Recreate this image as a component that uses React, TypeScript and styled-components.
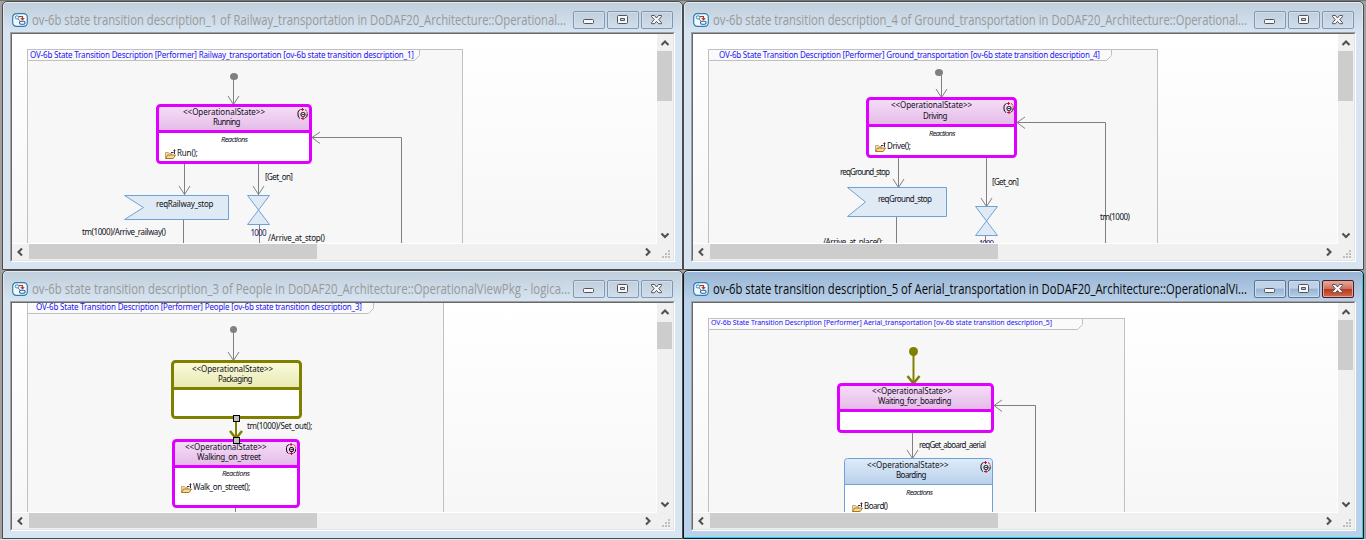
import React from "react";
import styled, { createGlobalStyle, css } from "styled-components";

const GlobalStyle = createGlobalStyle`
  html, body { margin: 0; padding: 0; }
  body { width: 1366px; height: 540px; overflow: hidden; background: #8f8f8f; }
  * { box-sizing: border-box; }
`;

const Desktop = styled.main`
  display: grid;
  grid-template-columns: 681px 681px;
  grid-template-rows: 269px 269px;
  width: 1366px;
  height: 540px;
  padding: 1px 0 0 2px;
  background: linear-gradient(#74766f 0 1px, #a0a0a0 1px 539px, #e4e8ea 539px);
`;

const Frame = styled.section<{ $active?: boolean }>`
  display: flex;
  flex-direction: column;
  padding: 0 7px 7px 7px;
  border: 1px solid #4b4b4d;
  border-radius: 5px 5px 0 0;
  box-shadow: inset 0 1px 0 #e4ecf3, inset 1px 0 0 #dfe8f2, inset -1px 0 0 #dfe8f2;
  background: linear-gradient(#c0cddb, #d7e4f1 30px);
  ${(p) =>
    p.$active &&
    css`
      border-color: #10181c;
      background: linear-gradient(#98b4d3, #b9d1ea 30px);
      box-shadow: inset 0 1px 0 #e6f2fb, inset -1px 0 0 #35c6e8, inset 0 -1px 0 #35c6e8;
    `}
`;

const TitleBar = styled.header`
  flex: none;
  display: flex;
  align-items: center;
  height: 30px;
  padding: 6px 2px 0 2px;
`;

const TitleArea = styled.h1`
  flex: 1;
  min-width: 0;
  margin: 0 0 0 4px;
`;

const TitleText = styled.text<{ $active?: boolean }>`
  font: 400 14px "Open Sans", "Noto Sans", sans-serif;
  fill: ${(p) => (p.$active ? "#0a0a0a" : "#999999")};
`;

const Buttons = styled.div`
  flex: none;
  display: flex;
  gap: 2px;
`;

const CaptionButton = styled.button<{ $tone: "idle" | "active" | "close" }>`
  display: flex;
  align-items: center;
  justify-content: center;
  width: 32px;
  height: 18px;
  padding: 0;
  border-radius: 2px;
  border: 1px solid #8497b0;
  background: linear-gradient(#c1cedc, #d0deec);
  box-shadow: inset 0 0 0 1px #d3dfeb;
  ${(p) =>
    p.$tone === "active" &&
    css`
      border-color: #60758f;
      background: linear-gradient(#bfd2e7 0 45%, #98b3d0 50%, #b5cfe9);
      box-shadow: inset 0 0 0 1px #c9dcf0;
    `}
  ${(p) =>
    p.$tone === "close" &&
    css`
      border-color: #4c1a22;
      background: linear-gradient(#e0a090 0 10%, #d0705c 48%, #b8391f 52%, #cf6a4c);
      box-shadow: inset 0 0 0 1px #e0a597;
    `}
`;

const Client = styled.div`
  display: grid;
  width: 665px;
  height: 230px;
  border-style: solid;
  border-width: 1px;
  border-color: #a0a0a0 #ffffff #ffffff #a0a0a0;
  background: #f0f0f0;
`;

const Inner = styled.div`
  display: grid;
  grid-template-columns: 645px 16px;
  grid-template-rows: 210px 16px;
  border-style: solid;
  border-width: 1px;
  border-color: #696969 #e3e3e3 #e3e3e3 #696969;
`;

const Canvas = styled.div`
  overflow: hidden;
  border-right: 1px solid #fff;
  border-bottom: 1px solid #fff;
  background: linear-gradient(#ffffff, #f7f7f7);
`;

const VBar = styled.div`
  display: flex;
  flex-direction: column;
  align-items: flex-start;
  background: #f0f0f0;
`;

const VThumb = styled.div<{ $size: number }>`
  width: 15px;
  height: ${(p) => p.$size}px;
  margin-bottom: auto;
  background: #cdcdcd;
`;

const HBar = styled.div`
  display: flex;
  background: #f0f0f0;
`;

const HThumb = styled.div`
  width: 288px;
  height: 15px;
  margin-right: auto;
  background: #cdcdcd;
`;

const Drawing = styled.svg`
  display: block;
  flex: none;
`;

const TitleLine = styled(Drawing)`
  overflow: visible;
`;

const Label = styled.text<{ $size?: number; $italic?: boolean }>`
  font-family: "Noto Sans", "DejaVu Sans", sans-serif;
  font-size: ${(p) => p.$size ?? 8}px;
  font-style: ${(p) => (p.$italic ? "italic" : "normal")};
`;

const MAGENTA = "#e000ff";
const OLIVE = "#808000";
const GRAY = "#808080";
const BLUE = "#6ea2d9";

interface TextProps {
  x: number;
  end: number;
  y: number;
  children: string;
  fill?: string;
  size?: number;
  italic?: boolean;
}

const T = ({ x, end, y, children, fill = "#101018", size, italic }: TextProps) => (
  <Label x={x} y={y} textLength={end - x} lengthAdjust="spacing" fill={fill} $size={size} $italic={italic}>
    {children}
  </Label>
);

const WindowIcon = () => (
  <Drawing width="16" height="14" viewBox="0 0 16 14" fill="none">
    <rect x="0.7" y="0.7" width="14.6" height="12.6" rx="3.6" fill="#f4fafd" stroke="#2f7dae" strokeWidth="1.2" />
    <ellipse cx="5" cy="4.4" rx="1.8" ry="1.6" fill="#fff" stroke="#2277b5" strokeWidth=".9" />
    <path d="M7 3.5h3.5v3M8.8 5.2l1.7 1.6 1.7-1.6" stroke="#b5361a" strokeWidth="1.1" />
    <rect x="7.5" y="8.200" width="5.6" height="3" rx="1.5" fill="#fff" stroke="#1b62a3" strokeWidth="1.1" />
    <path d="M6.300 6l1.500 2" stroke="#1b62a3" strokeWidth=".8" />
  </Drawing>
);

const MinimizeGlyph = () => (
  <Drawing width="12" height="12" viewBox="0 0 12 12">
    <rect x=".5" y="5.500" width="10" height="4" rx="1" fill="#f7f7f7" stroke="#51535f" />
  </Drawing>
);

const MaximizeGlyph = () => (
  <Drawing width="12" height="10" viewBox="0 0 12 10">
    <path d="M.5 1.5q0-1 1-1h8q1 0 1 1v6q0 1-1 1h-8q-1 0-1-1zM3.5 3.5v2h4v-2z" fill="#f7f7f7" stroke="#51535f" fillRule="evenodd" />
  </Drawing>
);

const CloseGlyph = () => (
  <Drawing width="12" height="10" viewBox="0 0 12 10">
    <path d="M.5.5h3L5.500 3 7.500.5h3v1L7.800 4.700l2.700 3v1h-3L5.500 6.400 3.500 8.700h-3v-1l2.700-3L.5 1.500z" fill="#f7f7f7" stroke="#51535f" />
  </Drawing>
);

const paths = {
  up: "M4.500 11L8 7.500 11.500 11",
  down: "M4.500 5.500L8 9 11.500 5.500",
  left: "M10 4.500L6.500 8 10 11.500",
  right: "M5 4.500L8.500 8 5 11.500",
};

const Arrow = ({ dir, w = 16, h = 16 }: { dir: keyof typeof paths; w?: number; h?: number }) => (
  <Drawing width={w} height={h} viewBox={`0 0 ${w} ${h}`}>
    <path d={paths[dir]} fill="none" stroke="#505050" strokeWidth="2.1" />
  </Drawing>
);

const Grip = () => (
  <Drawing width="16" height="16" viewBox="0 0 16 16" fill="#bfbfbf">
    {[[11, 6], [8, 9], [11, 9], [5, 12], [8, 12], [11, 12]].map(([x, y]) => (
      <rect key={`${x}-${y}`} x={x} y={y} width="2" height="2" />
    ))}
  </Drawing>
);

const Folder = ({ x, y }: { x: number; y: number }) => (
  <g transform={`translate(${x} ${y})`}>
    <path d="M.5 9.500V3.500h3l1 1h2v1.500" fill="#f5dc9a" stroke="#b8975a" strokeWidth=".8" />
    <path d="M.5 9.500l2.200-3.500h7.800l-2.300 3.500z" fill="#ffd98a" stroke="#9c6b24" strokeWidth=".9" />
    <path d="M6 3.500h2.500M9.500 1v4" stroke="#23324f" fill="none" />
    <path d="M8.300 1.800l1.200-1.300 1 1" stroke="#b34716" fill="none" />
  </g>
);

const ReactionMark = ({ x, y }: { x: number; y: number }) => (
  <g transform={`translate(${x} ${y})`} fill="none" strokeWidth="1">
    <path d="M2.500 10.500Q.5 9.500.5 7V4.500Q.5 2.500 3 1.500" stroke="#111" />
    <path d="M3.500 1.500H6.500M5 0v3" stroke="#c4122f" />
    <path d="M7.500 1.500Q9.800 2.500 9.800 6" stroke="#c4122f" strokeDasharray="2 1" />
    <path d="M9.800 6Q9.800 9 7.500 10.300" stroke="#111" />
    <path d="M3.500 10.500h3.500M5.500 9v3" stroke="#c4122f" />
    <rect x="3.500" y="4.500" width="4" height="4" rx="1.500" stroke="#111" />
    <path d="M4.500 6.500h2.500" stroke="#111" strokeWidth=".8" />
  </g>
);

interface StateProps {
  x: number;
  y: number;
  r: number;
  b: number;
  split: number;
  kind: "magenta" | "olive" | "blue";
}

const StateBox = ({ x, y, r, b, split, kind }: StateProps) => {
  const thick = kind === "blue" ? 1 : 3;
  const color = { magenta: MAGENTA, olive: OLIVE, blue: BLUE }[kind];
  const h = thick / 2;
  return (
    <g>
      <rect x={x + h} y={y + h} width={r - x - thick} height={b - y - thick} rx="3" fill="#fff" />
      <path d={`M${x + h} ${split}V${y + 4}q0-3 3-3H${r - 4}q3 0 3 3V${split}z`} fill={`url(#${kind})`} />
      <path d={`M${x + 1} ${split}H${r - 1}`} stroke={color} strokeWidth={thick} />
      <rect x={x + h} y={y + h} width={r - x - thick} height={b - y - thick} rx="3" fill="none" stroke={color} strokeWidth={thick} />
    </g>
  );
};

const Gradients = () => (
  <defs>
    {[
      ["magenta", "#f7dffa", "#e3bae6"],
      ["olive", "#fbfbdc", "#e8e8b4"],
      ["blue", "#deebf9", "#b9d0ea"],
    ].map(([id, from, to]) => (
      <linearGradient key={id} id={id} x1="0" y1="0" x2="0" y2="1">
        <stop offset="0" stopColor={from} />
        <stop offset="1" stopColor={to} />
      </linearGradient>
    ))}
  </defs>
);

const Down = ({ x, from, to }: { x: number; from: number; to: number }) => (
  <g fill="none" stroke={GRAY}>
    <path d={`M${x} ${from}V${to}`} />
    <path d={`M${x - 5.500} ${to - 9}L${x} ${to - 0.500}L${x + 5.500} ${to - 9}`} />
  </g>
);

const BoldDown = ({ x, from, to }: { x: number; from: number; to: number }) => (
  <g fill="none" stroke={OLIVE} strokeWidth="2">
    <path d={`M${x} ${from}V${to}`} />
    <path d={`M${x - 6} ${to - 9}L${x} ${to - 1.500}L${x + 6} ${to - 9}`} strokeWidth="2.500" />
  </g>
);

const Return = ({ x, y, right, bottom }: { x: number; y: number; right: number; bottom: number }) => (
  <g fill="none" stroke={GRAY}>
    <path d={`M${x} ${y}H${right}V${bottom}`} />
    <path d={`M${x + 8} ${y - 5.500}L${x} ${y}L${x + 8} ${y + 6}`} />
  </g>
);

const Line = ({ x, from, to }: { x: number; from: number; to: number }) => <path d={`M${x} ${from}V${to}`} stroke={GRAY} />;

const Signal = ({ x, y, r, b, notch }: { x: number; y: number; r: number; b: number; notch: number }) => (
  <path d={`M${x} ${y}H${r}V${b}H${x}L${notch} ${(y + b) / 2}z`} fill="#e0eaf5" stroke={BLUE} />
);

const Hourglass = ({ x, y, r, b }: { x: number; y: number; r: number; b: number }) => (
  <path d={`M${x} ${y}H${r}L${x} ${b}H${r}z`} fill="#e0eaf5" stroke={BLUE} />
);

const Sheet = ({ x, y, r, tab, tabY }: { x: number; y: number; r: number; tab: number; tabY: number }) => (
  <g stroke="#c0c0c0">
    <rect x={x} y={y} width={r - x} height="300" fill="#f7f7f7" />
    <path d={`M${x} ${y}H${tab}V${tabY - 5}L${tab - 5} ${tabY}H${x}z`} fill="#fafafa" />
  </g>
);

const TITLE = "#2414f5";

const Railway = () => (
  <>
    <Sheet x={27.5} y={49.5} r={462.5} tab={419.5} tabY={60.5} />
    <T x={30} end={414} y={57.500} fill={TITLE}>OV-6b State Transition Description [Performer] Railway_transportation [ov-6b state transition description_1]</T>
    <ellipse cx="234" cy="76.500" rx="4" ry="3.500" fill={GRAY} />
    <Down x={233.5} from={79} to={105} />
    <Return x={312} y={137.5} right={401.5} bottom={244} />
    <StateBox x={156} y={104} r={312} b={164} split={131.5} kind="magenta" />
    <T x={183} end={265} y={115}>{"<<OperationalState>>"}</T>
    <T x={213} end={240.5} y={125}>Running</T>
    <ReactionMark x={297.500} y={108} />
    <T x={221} end={248} y={142} italic size={7.5}>Reactions</T>
    <Folder x={165} y={149} />
    <T x={177} end={198} y={156}>Run();</T>
    <Down x={184.5} from={164} to={195} />
    <Down x={258.5} from={164} to={195} />
    <T x={265} end={293} y={180}>[Get_on]</T>
    <Signal x={124.5} y={195.5} r={228.5} b={219.5} notch={143.500} />
    <T x={156} end={213.5} y={207}>reqRailway_stop</T>
    <Hourglass x={247.5} y={195.500} r={269.500} b={224.500} />
    <Line x={183.5} from={220} to={244} />
    <Line x={259.5} from={225} to={244} />
    <T x={82} end={166} y={235}>tm(1000)/Arrive_railway()</T>
    <T x={250.500} end={266.500} y={236} fill="#22226a">1000</T>
    <T x={268} end={325} y={241}>/Arrive_at_stop()</T>
  </>
);

const Ground = () => (
  <>
    <Sheet x={708.5} y={49.5} r={1157.5} tab={1111.5} tabY={60.5} />
    <T x={719} end={1100} y={57.500} fill={TITLE}>OV-6b State Transition Description [Performer] Ground_transportation [ov-6b state transition description_4]</T>
    <ellipse cx="939" cy="72.500" rx="4" ry="3.500" fill={GRAY} />
    <Down x={941.5} from={74} to={98} />
    <Return x={1017} y={122.5} right={1105.5} bottom={244} />
    <StateBox x={866} y={97} r={1017} b={158} split={125.5} kind="magenta" />
    <T x={891} end={972} y={108}>{"<<OperationalState>>"}</T>
    <T x={923} end={947.5} y={119}>Driving</T>
    <ReactionMark x={1003.500} y={102} />
    <T x={929} end={955.500} y={135.500} italic size={7.5}>Reactions</T>
    <Folder x={875} y={142} />
    <T x={887} end={911} y={149}>Drive();</T>
    <Down x={898.5} from={158} to={188} />
    <Down x={986.5} from={158} to={207} />
    <T x={840} end={890} y={175}>reqGround_stop</T>
    <T x={992} end={1019} y={185}>[Get_on]</T>
    <Signal x={847.5} y={187.500} r={946.500} b={216.500} notch={865.500} />
    <T x={878} end={932} y={202}>reqGround_stop</T>
    <Hourglass x={975.5} y={206.5} r={997.500} b={235.5} />
    <Line x={896.5} from={217} to={244} />
    <Line x={985.5} from={236} to={244} />
    <T x={823} end={883} y={245}>/Arrive_at_place();</T>
    <T x={979} end={994} y={246.500} fill="#22226a">1000</T>
    <T x={1100} end={1130} y={220}>tm(1000)</T>
  </>
);

const People = () => (
  <>
    <Sheet x={27.5} y={300.5} r={443.5} tab={373.5} tabY={313.5} />
    <T x={36} end={362} y={310} fill={TITLE}>OV-6b State Transition Description [Performer] People [ov-6b state transition description_3]</T>
    <circle cx="233.500" cy="329.500" r="3.500" fill={GRAY} />
    <Down x={233.5} from={332} to={361} />
    <StateBox x={171} y={360} r={302} b={419} split={388.5} kind="olive" />
    <T x={192} end={273} y={372}>{"<<OperationalState>>"}</T>
    <T x={218} end={252.500} y={382}>Packaging</T>
    <StateBox x={172} y={439} r={300} b={508} split={466.5} kind="magenta" />
    <BoldDown x={236} from={418} to={440} />
    <T x={247} end={312.5} y={429}>tm(1000)/Set_out();</T>
    <T x={185} end={266.500} y={450}>{"<<OperationalState>>"}</T>
    <rect x="233.500" y="415.500" width="6" height="6" fill="#c0c0c0" stroke="#000" />
    <rect x="233.500" y="437.500" width="6" height="6" fill="#c0c0c0" stroke="#000" />
    <T x={197} end={261} y={460}>Walking_on_street</T>
    <ReactionMark x={286} y={443} />
    <T x={222} end={250} y={476} italic size={7.5}>Reactions</T>
    <Folder x={181} y={483} />
    <T x={193} end={250.500} y={490}>Walk_on_street();</T>
    <Line x={235.5} from={508} to={513} />
  </>
);

const Aerial = () => (
  <>
    <Sheet x={708.5} y={318.5} r={1124.5} tab={1082.5} tabY={329.5} />
    <T x={711} end={1052} y={325} size={7} fill={TITLE}>OV-6b State Transition Description [Performer] Aerial_transportation [ov-6b state transition description_5]</T>
    <circle cx="913.500" cy="351.500" r="4.500" fill={OLIVE} />
    <BoldDown x={913.5} from={353} to={385} />
    <Return x={994} y={405.5} right={1035.5} bottom={513} />
    <StateBox x={837} y={383} r={994} b={433} split={410.5} kind="magenta" />
    <T x={872} end={952} y={394}>{"<<OperationalState>>"}</T>
    <T x={878} end={951.500} y={404}>Waiting_for_boarding</T>
    <Down x={912.5} from={433} to={459} />
    <T x={919} end={986} y={448}>reqGet_aboard_aerial</T>
    <StateBox x={844} y={458} r={993} b={530} split={484.5} kind="blue" />
    <T x={867} end={948.500} y={468}>{"<<OperationalState>>"}</T>
    <T x={896} end={926.500} y={478}>Boarding</T>
    <ReactionMark x={980.500} y={461} />
    <T x={906} end={933} y={495} italic size={7.5}>Reactions</T>
    <Folder x={852} y={502} />
    <T x={864} end={888} y={509}>Board()</T>
  </>
);

interface WindowProps {
  title: string;
  titleWidth: number;
  origin: [number, number];
  thumb: [number, number];
  active?: boolean;
  children: React.ReactNode;
}

const DiagramWindow = ({ title, titleWidth, origin, thumb, active, children }: WindowProps) => {
  const tone = active ? "active" : "idle";
  return (
    <Frame $active={active}>
      <TitleBar>
        <WindowIcon />
        <TitleArea>
          <TitleLine width={titleWidth + 2} height="22">
            <TitleText $active={active} x="0" y="16" textLength={titleWidth} lengthAdjust="spacingAndGlyphs">{title}</TitleText>
          </TitleLine>
        </TitleArea>
        <Buttons>
          <CaptionButton $tone={tone} aria-label="Minimize"><MinimizeGlyph /></CaptionButton>
          <CaptionButton $tone={tone} aria-label="Maximize"><MaximizeGlyph /></CaptionButton>
          <CaptionButton $tone={active ? "close" : "idle"} aria-label="Close"><CloseGlyph /></CaptionButton>
        </Buttons>
      </TitleBar>
      <Client>
        <Inner>
          <Canvas>
            <Drawing width="644" height="209" viewBox={`${origin[0]} ${origin[1]} 644 209`}>
              <Gradients />
              {children}
            </Drawing>
          </Canvas>
          <VBar>
            <Arrow dir="up" h={thumb[0]} />
            <VThumb $size={thumb[1]} />
            <Arrow dir="down" />
          </VBar>
          <HBar>
            <Arrow dir="left" w={17} />
            <HThumb />
            <Arrow dir="right" />
          </HBar>
          <Grip />
        </Inner>
      </Client>
    </Frame>
  );
};

export default function App() {
  return (
    <>
      <GlobalStyle />
      <Desktop>
        <DiagramWindow title="ov-6b state transition description_1 of Railway_transportation in DoDAF20_Architecture::Operational..." titleWidth={534} origin={[12, 34]} thumb={[17, 50]}>
          <Railway />
        </DiagramWindow>
        <DiagramWindow title="ov-6b state transition description_4 of Ground_transportation in DoDAF20_Architecture::Operational..." titleWidth={534} origin={[693, 34]} thumb={[17, 50]}>
          <Ground />
        </DiagramWindow>
        <DiagramWindow title="ov-6b state transition description_3 of People in DoDAF20_Architecture::OperationalViewPkg - logica..." titleWidth={538} origin={[12, 303]} thumb={[19, 27]}>
          <People />
        </DiagramWindow>
        <DiagramWindow title="ov-6b state transition description_5 of Aerial_transportation in DoDAF20_Architecture::OperationalVi..." titleWidth={534} origin={[693, 303]} thumb={[17, 50]} active>
          <Aerial />
        </DiagramWindow>
      </Desktop>
    </>
  );
}
